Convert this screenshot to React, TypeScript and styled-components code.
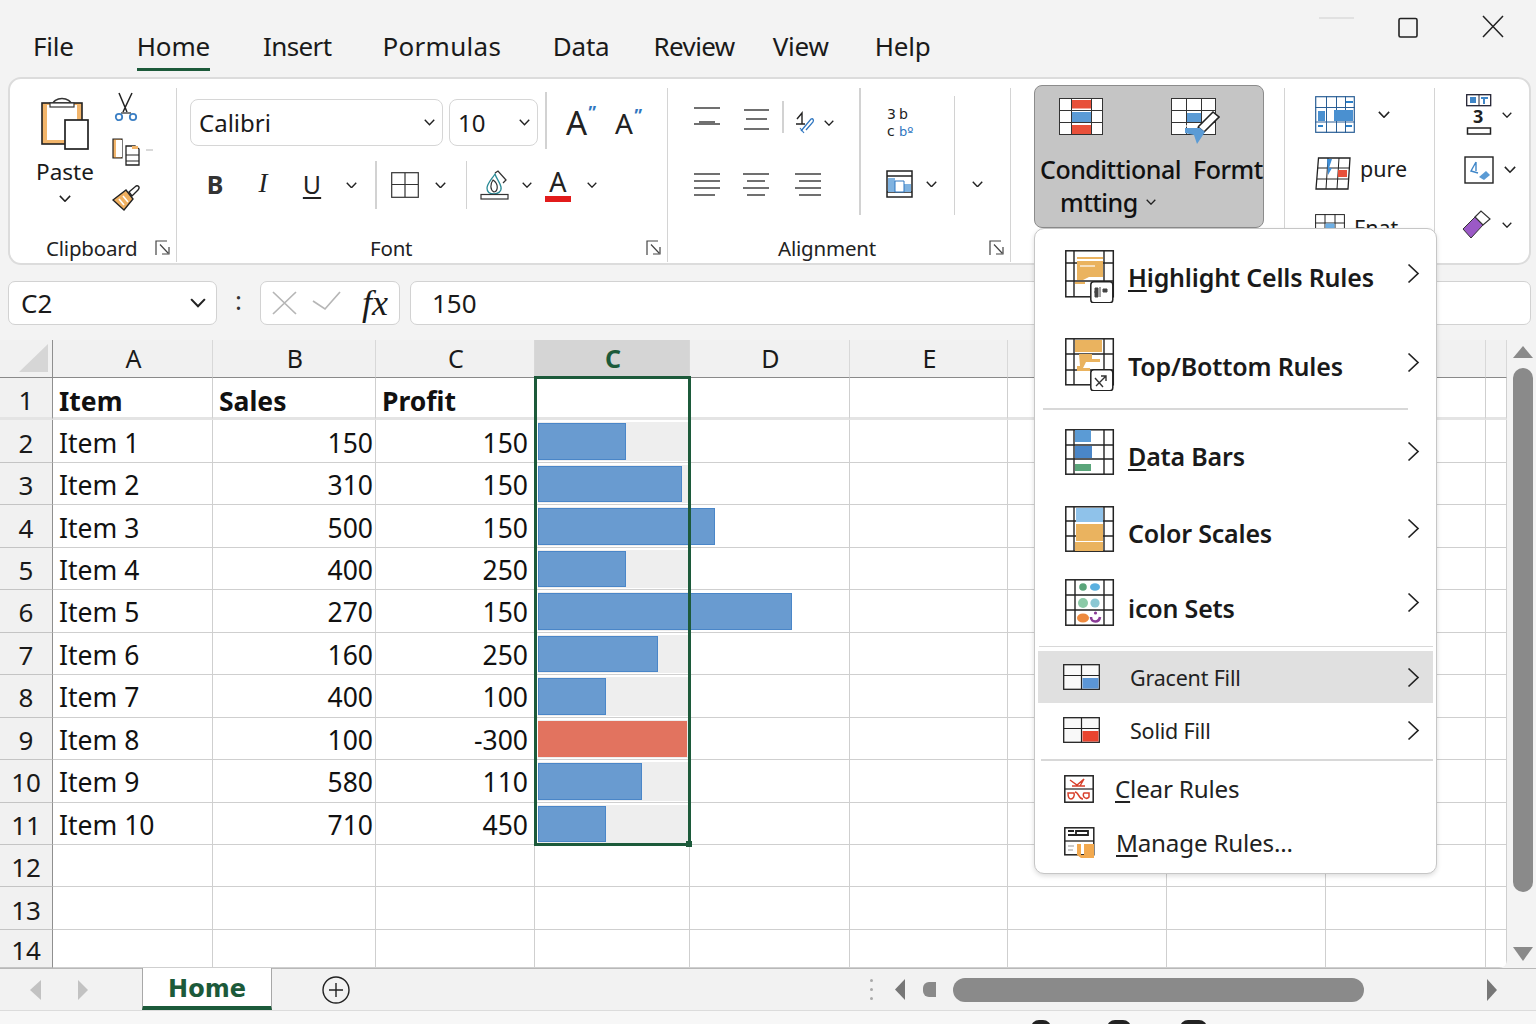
import React from 'react';
import styled, { createGlobalStyle } from 'styled-components';

const UI = '"Noto Sans", "Open Sans", "Liberation Sans", sans-serif';
const GREEN = '#1c5a3a';

const GlobalStyle = createGlobalStyle`
  html, body { margin: 0; padding: 0; background: #f3f3f3; overflow: hidden; }
  body { font-family: ${UI}; color: #1a1a1a; }
  #root { width: 1536px; height: 1024px; }
  * { box-sizing: border-box; }
`;

/* ---------- icons ---------- */

const Chev: React.FC<{ s?: number }> = ({ s = 10 }) => (
  <svg width={s} height={s * 0.6} viewBox="0 0 10 6" fill="none" stroke="#222" strokeWidth="1.3">
    <path d="M.7.7 5 5.2 9.3.7" />
  </svg>
);

const Launcher = () => (
  <svg width="15" height="16" viewBox="0 0 15 16" fill="none" stroke="#444" strokeWidth="1.2">
    <path d="M1 15V1h11" />
    <path d="M5 4.5 13 13M7 14h7V7" />
  </svg>
);

const PasteIcon = () => (
  <svg width="50" height="56" viewBox="0 0 50 56">
    <rect x="2" y="7" width="40" height="41" fill="#f2b56b" stroke="#222" strokeWidth="1.6" />
    <rect x="7" y="9" width="30" height="35" fill="#fff" />
    <path d="M12 10c1-10 19-10 20 0" fill="none" stroke="#333" strokeWidth="1.6" />
    <rect x="10" y="7" width="24" height="4" fill="#fff" stroke="#333" strokeWidth="1.2" />
    <rect x="25" y="24" width="23" height="29" fill="#fff" stroke="#222" strokeWidth="1.7" />
  </svg>
);

const ScissorsIcon = () => (
  <svg width="24" height="30" viewBox="0 0 24 30" fill="none">
    <path d="M5 1 13 20M18 1 9 20" stroke="#222" strokeWidth="1.5" />
    <path d="M7 21h10" stroke="#222" strokeWidth="1.2" />
    <circle cx="5" cy="25" r="3.2" stroke="#3b7fc4" strokeWidth="1.8" />
    <circle cx="19" cy="25" r="3.2" stroke="#3b7fc4" strokeWidth="1.8" />
  </svg>
);

const CopyIcon = () => (
  <svg width="42" height="30" viewBox="0 0 42 30" fill="none">
    <path d="M1 2h9v19H1z" fill="#f2b56b" stroke="#222" strokeWidth="1.2" />
    <path d="M4 3h6v17H4z" fill="#fff" />
    <path d="M14 9h9l4 3v16H14z" fill="#fff" stroke="#222" strokeWidth="1.3" />
    <path d="M14 18h13M14 24h13" stroke="#222" strokeWidth="1" />
    <path d="M20 9h6v3h-6z" fill="#f2b56b" />
    <path d="M34 13h7" stroke="#ccc" strokeWidth="1.5" />
  </svg>
);

const BrushIcon = () => (
  <svg width="28" height="26" viewBox="0 0 28 26">
    <path d="M1 15 14 5l7 9-9 11z" fill="#f0b060" stroke="#222" strokeWidth="1.4" />
    <path d="M7 14l5 6M11 11l5 6" stroke="#fff" strokeWidth="1.6" />
    <path d="M17 7 24 1c3-1 4 2 2 4l-6 6z" fill="#fff" stroke="#222" strokeWidth="1.4" />
  </svg>
);

const BordersIcon = () => (
  <svg width="28" height="26" viewBox="0 0 28 26" fill="#fff" stroke="#333" strokeWidth="1.2">
    <rect x=".7" y=".7" width="26.6" height="24.6" />
    <path d="M14 1v24M1 12.5h26" />
  </svg>
);

const FillIcon = () => (
  <svg width="30" height="30" viewBox="0 0 30 30" fill="none">
    <path d="M15 4c-4 6-8 10-8 14 0 5 4 6 7 6s8-2 7-7-5-9-6-13z" stroke="#2a8a96" strokeWidth="1.3" />
    <path d="M13 10c-3 4-3 10 1 12 4-1 5-8-1-12z" stroke="#333" strokeWidth="1.2" />
    <path d="M15 3l3-2 8 9-3 3" stroke="#333" strokeWidth="1.3" />
    <rect x="1" y="24.5" width="27" height="4.5" fill="#fff" stroke="#333" strokeWidth="1.2" />
  </svg>
);

const AlignLines: React.FC<{ lines: [number, number, number][] }> = ({ lines }) => (
  <svg width="28" height="26" viewBox="0 0 28 26" stroke="#222" strokeWidth="1.3">
    {lines.map(([a, b, y]) => (
      <path key={y} d={`M${a} ${y}H${b}`} />
    ))}
  </svg>
);

const OrientIcon = () => (
  <svg width="20" height="24" viewBox="0 0 20 24" fill="none">
    <path d="M2 8 7 2v11M1 13h9" stroke="#222" strokeWidth="1.4" />
    <path d="M6 20 16 8c2-1 3 1 2 3l-7 8" stroke="#2f76c0" strokeWidth="1.3" />
    <path d="M5 17l4 5" stroke="#2f76c0" strokeWidth="1.2" />
  </svg>
);

const WrapIcon = () => (
  <svg width="32" height="38" viewBox="0 0 32 38">
    <text x="3" y="15" fontFamily="DejaVu Sans" fontSize="14" letterSpacing="3" fill="#222">3b</text>
    <text x="3" y="32" fontFamily="DejaVu Sans" fontSize="14" fill="#222">c</text>
    <text x="15" y="32" fontFamily="DejaVu Sans" fontSize="13" fill="#2f76c0">bº</text>
  </svg>
);

const MergeIcon = () => (
  <svg width="27" height="28" viewBox="0 0 27 28" fill="none">
    <rect x="1" y="1" width="25" height="26" fill="#fff" stroke="#222" strokeWidth="1.5" />
    <path d="M1 6h25M1 22h25" stroke="#222" strokeWidth="1.5" />
    <path d="M2 8h7v14H2zM18 14h7v8h-7z" fill="#7fb2e0" />
    <path d="M9 11h9v11H9z" fill="#fff" stroke="#2f76c0" strokeWidth="1" />
  </svg>
);

const CondOneIcon = () => (
  <svg width="44" height="37" viewBox="0 0 44 37">
    <rect x=".5" y=".5" width="43" height="36" fill="#fff" stroke="#333" />
    <path d="M12.5 0v37M32.5 0v37M0 12.5h44M0 24.5h44" stroke="#333" />
    <rect x="13" y="2" width="19" height="8.5" fill="#e8503a" />
    <rect x="13" y="14" width="19" height="10" fill="#5b9bd5" />
    <rect x="13" y="27" width="19" height="9" fill="#e8503a" />
  </svg>
);

const CondTwoIcon = () => (
  <svg width="49" height="47" viewBox="0 0 49 47">
    <rect x=".5" y=".5" width="44" height="36" fill="#fff" stroke="#333" />
    <path d="M15.5 0v37M30.5 0v37M0 12.5h45M0 24.5h45" stroke="#333" />
    <rect x="16" y="15" width="14" height="9" fill="#5b9bd5" />
    <path d="M27 29 42 14l6 5-15 15z" fill="#fff" stroke="#222" strokeWidth="1.6" />
    <path d="M14 30h15l5 4-8 12-3-9-9-2z" fill="#5b9bd5" />
    <path d="M15 28h12" stroke="#fff" strokeWidth="1.2" />
  </svg>
);

const TableBlueIcon = () => (
  <svg width="40" height="37" viewBox="0 0 40 37">
    <rect x=".7" y=".7" width="38.6" height="35.6" fill="#fff" stroke="#2a5f96" strokeWidth="1.2" />
    <path d="M11.5 0v37M21.5 0v37M30.5 0v37M0 11.5h40M0 26h40" stroke="#2a5f96" />
    <path d="M3 15h7v10H3zM19 14h19v11H19z" fill="#4a90d0" />
    <path d="M31 6h7M3 30h5M31 30h6" stroke="#2a7fc8" strokeWidth="2" />
  </svg>
);

const PureIcon = () => (
  <svg width="36" height="33" viewBox="0 0 36 33">
    <path d="M3.5 1H35l-2 31H1z" fill="#fff" stroke="#222" strokeWidth="1.3" />
    <path d="M13 1 11 32M24 1l-2 31M2.5 11H34M2 22h31" stroke="#222" />
    <path d="M12 2h5l-3 9h3l-4 7z" fill="#3f8fd8" />
    <rect x="23" y="13" width="9" height="7" fill="#e8503a" />
  </svg>
);

const FormatSmallIcon = () => (
  <svg width="30" height="20" viewBox="0 0 30 20">
    <rect x=".6" y=".6" width="28.8" height="30" fill="#fff" stroke="#222" />
    <path d="M10 0v20M20 0v20M0 9h30" stroke="#222" />
    <rect x="10.5" y="9.5" width="9" height="8" fill="#6eb0e6" />
  </svg>
);

const NumberThreeIcon = () => (
  <svg width="28" height="42" viewBox="0 0 28 42">
    <rect x=".7" y=".7" width="24" height="11" fill="#fff" stroke="#223" strokeWidth="1.3" />
    <path d="M13 1v11" stroke="#223" />
    <path d="M4 3h6v6H4zM15 3h7v2h-3v5h-2V5h-2z" fill="#3f86c8" />
    <text x="7" y="29" fontFamily="Noto Sans" fontWeight="700" fontSize="18" fill="#222">3</text>
    <rect x="1.5" y="34" width="23" height="6" fill="#fff" stroke="#222" strokeWidth="1.5" />
  </svg>
);

const SortBoxIcon = () => (
  <svg width="30" height="28" viewBox="0 0 30 28" fill="none">
    <rect x="1" y="1" width="28" height="26" fill="#fff" stroke="#222" strokeWidth="1.4" />
    <path d="M12 6 7 15l7 2M12 6v9" stroke="#3f86c8" strokeWidth="1.4" />
    <path d="M15 21l7-6 4 4-6 5z" fill="#5b9bd5" />
  </svg>
);

const EraserIcon = () => (
  <svg width="30" height="30" viewBox="0 0 30 30">
    <path d="M1 19 13 7l8 8L9 28z" fill="#9b59c6" stroke="#333" strokeWidth="1" />
    <path d="M13 7 19 1l9 8-7 6z" fill="#fff" stroke="#333" strokeWidth="1.2" />
  </svg>
);

const MenuFrame: React.FC<{
  h: number;
  xs?: number[];
  ys: number[];
  children?: React.ReactNode;
  badge?: React.ReactNode;
}> = ({ h, xs = [9, 39], ys, children, badge }) => (
  <svg width="50" height={h} viewBox={`0 0 50 ${h}`}>
    <rect x=".8" y=".8" width="47.5" height={h - (badge ? 7 : 1.6)} fill="#fff" stroke="#222" strokeWidth="1.5" />
    {xs.map(x => <path key={x} d={`M${x} 1V${h - (badge ? 6 : 1)}`} stroke="#222" strokeWidth="1.4" />)}
    {ys.map(y => <path key={y} d={`M1 ${y}H48`} stroke="#222" strokeWidth="1.4" />)}
    {children}
    {badge}
  </svg>
);

const Badge: React.FC<{ children: React.ReactNode; y: number }> = ({ children, y }) => (
  <g transform={`translate(25 ${y})`}>
    <rect x=".8" y=".8" width="22" height="21" rx="3" fill="#fff" stroke="#222" strokeWidth="1.5" />
    {children}
  </g>
);

const HighlightIcon = () => (
  <MenuFrame h={53} ys={[13, 31]} badge={
    <Badge y={31}><path d="M5 7h3v9H5zM10 6v10M13 8h4v3h-4zM6 11H4" fill="#444" stroke="#444" /></Badge>
  }>
    <path d="M12 7h26v2H12z" fill="#eab35f" />
    <path d="M12 11h26v16H24l-6 3h-6z" fill="#eab35f" />
    <path d="M15 16h15" stroke="#fff" strokeWidth="2" opacity=".6" />
    <path d="M10 32h10v2H10z" fill="#eab35f" />
  </MenuFrame>
);

const TopBottomIcon = () => (
  <MenuFrame h={53} ys={[16, 32]} badge={
    <Badge y={31}><path d="M6 17 16 7M11 7h5v5M5 9l8 9" fill="none" stroke="#333" strokeWidth="1.4" /></Badge>
  }>
    <path d="M10 2h27v12H10z" fill="#eab35f" />
    <path d="M14 16h13v5h8v3H21l-3 6h7v3H12v-5h3z" fill="#eab35f" />
  </MenuFrame>
);

const DataBarsIcon = () => (
  <MenuFrame h={46} ys={[16, 30]}>
    <path d="M10 1h16v12H10z" fill="#5b9bd5" />
    <path d="M10 17h17v12H10z" fill="#4a86c8" />
    <path d="M10 35h16v7H10z" fill="#5aa57a" />
  </MenuFrame>
);

const ColorScalesIcon = () => (
  <MenuFrame h={46} ys={[15, 30]}>
    <path d="M11 2h27v14H11z" fill="#8fc2ea" />
    <path d="M11 18h27v17H11zM10 36h28v9H10z" fill="#eab35f" />
  </MenuFrame>
);

const IconSetsIcon = () => (
  <MenuFrame h={47} xs={[10, 39]} ys={[16, 31]}>
    <circle cx="18" cy="8" r="3.8" fill="#5aa57a" />
    <ellipse cx="30" cy="8" rx="5" ry="3.8" fill="#5ab0e0" />
    <circle cx="18" cy="24" r="5" fill="#8ccaa8" />
    <circle cx="30" cy="24" r="4.6" fill="#8cc8d4" />
    <ellipse cx="18" cy="39" rx="6" ry="4.6" fill="#ee8a3e" />
    <path d="M26 38c0 6 8 6 9 0" fill="none" stroke="#8a3a96" strokeWidth="2.6" />
    <circle cx="30.5" cy="34" r="1.6" fill="#8a3a96" />
  </MenuFrame>
);

const FillSwatch: React.FC<{ color: string }> = ({ color }) => (
  <svg width="37" height="26" viewBox="0 0 37 26">
    <rect x=".7" y=".7" width="35.6" height="24.6" fill="#f9f9f9" stroke="#222" strokeWidth="1.3" />
    <path d="M18.5 1v24M1 11.5h35" stroke="#222" strokeWidth="1.2" />
    <rect x="19.5" y="14" width="16" height="10.5" fill={color} />
  </svg>
);

const ClearIcon = () => (
  <svg width="30" height="28" viewBox="0 0 30 28" fill="none">
    <rect x=".8" y=".8" width="28.4" height="26.4" fill="#fff" stroke="#222" strokeWidth="1.5" />
    <path d="M1 14h28" stroke="#222" strokeWidth="1.2" />
    <path d="M6 5l7 5 7-6-4 7M8 11h13" stroke="#d8402c" strokeWidth="1.4" />
    <path d="M4 18h6c1 3-1 6-3 6s-3-3-3-6zM11 17c4 0 3 7 8 7M20 18h5v4a3 3 0 0 1-5-4z" stroke="#d8402c" strokeWidth="1.5" />
  </svg>
);

const ManageIcon = () => (
  <svg width="31" height="32" viewBox="0 0 31 32" fill="none">
    <rect x=".8" y=".8" width="29" height="27" fill="#fff" stroke="#222" strokeWidth="1.5" />
    <path d="M1 14h29" stroke="#222" strokeWidth="1.3" />
    <path d="M4 4h6M12 4h12v4H12zM4 8h10" stroke="#222" strokeWidth="1.8" />
    <path d="M4 19h6M4 23h5" stroke="#bbb" strokeWidth="1.4" />
    <path d="M13 17h4v11h3v3h-3l-4-3zM20 17h10v14H20z" fill="#f2a94f" />
  </svg>
);

const Tri: React.FC<{ dir: 'l' | 'r' | 'u' | 'd'; c: string; w: number; h: number }> = ({ dir, c, w, h }) => {
  const pts = {
    l: `${w},0 ${w},${h} 0,${h / 2}`,
    r: `0,0 0,${h} ${w},${h / 2}`,
    u: `0,${h} ${w},${h} ${w / 2},0`,
    d: `0,0 ${w},0 ${w / 2},${h}`,
  }[dir];
  return (
    <svg width={w} height={h} viewBox={`0 0 ${w} ${h}`} style={{ flex: 'none' }}>
      <polygon points={pts} fill={c} />
    </svg>
  );
};

const MenuArrow = () => (
  <svg width="13" height="21" viewBox="0 0 13 21" fill="none" stroke="#222" strokeWidth="1.7">
    <path d="M1.5 1.5 11 10.5 1.5 19.5" />
  </svg>
);

/* ---------- layout ---------- */

const Page = styled.div`
  width: 1536px;
  height: 1024px;
  display: flex;
  flex-direction: column;
  position: relative;
  overflow: hidden;
`;

const TopRow = styled.div`
  height: 77px;
  flex: none;
  display: flex;
  justify-content: space-between;
`;

const Tabs = styled.nav`
  display: flex;
  padding-left: 33px;
`;

const Tab = styled.div<{ $ml: number; $ls: number; $active?: boolean }>`
  margin-left: ${p => p.$ml}px;
  height: 71px;
  padding-top: 27px;
  font-size: 26px;
  line-height: 38px;
  letter-spacing: ${p => p.$ls}px;
  white-space: nowrap;
  border-bottom: 3px solid ${p => (p.$active ? GREEN : 'transparent')};
`;

const WindowButtons = styled.div`
  display: flex;
  align-items: flex-start;
  padding: 15px 32px 0 0;
`;

const WinBtn = styled.div<{ $ml: number }>`
  margin-left: ${p => p.$ml}px;
  display: flex;
`;

const Ribbon = styled.div`
  flex: none;
  width: 1523px;
  height: 188px;
  margin-left: 8px;
  display: flex;
  background: #fff;
  border: 2px solid #dcdcdc;
  border-radius: 13px;
`;

const Group = styled.section<{ $w: number; $line?: boolean }>`
  flex: none;
  width: ${p => p.$w}px;
  height: 174px;
  margin-top: 9px;
  display: flex;
  flex-direction: column;
  border-right: ${p => (p.$line ? '1.5px solid #d4d4d4' : 'none')};
`;

const GroupBody = styled.div<{ $pl?: number; $pt?: number }>`
  flex: 1;
  display: flex;
  padding: ${p => p.$pt ?? 0}px 0 0 ${p => p.$pl ?? 0}px;
  min-height: 0;
`;

const GroupLabel = styled.div<{ $pl: number }>`
  height: 28px;
  flex: none;
  display: flex;
  align-items: center;
  padding-left: ${p => p.$pl}px;
  padding-right: 6px;
  font-size: 20.5px;
  color: #222;
  letter-spacing: -0.2px;
  & > svg {
    margin-left: auto;
  }
`;

const Column = styled.div<{ $gap?: number; $ml?: number; $w?: number }>`
  display: flex;
  flex-direction: column;
  flex: none;
  gap: ${p => p.$gap ?? 0}px;
  margin-left: ${p => p.$ml ?? 0}px;
  width: ${p => (p.$w ? `${p.$w}px` : 'auto')};
`;

const Row = styled.div<{ $h?: number; $mt?: number; $pl?: number }>`
  display: flex;
  align-items: center;
  flex: none;
  height: ${p => (p.$h ? `${p.$h}px` : 'auto')};
  margin-top: ${p => p.$mt ?? 0}px;
  padding-left: ${p => p.$pl ?? 0}px;
`;

const Tool = styled.div<{ $w: number; $mt?: number }>`
  flex: none;
  width: ${p => p.$w}px;
  margin-top: ${p => p.$mt ?? 0}px;
  display: flex;
  align-items: center;
  justify-content: center;
  color: #222;
  & > svg {
    flex: none;
  }
`;

const BoxEnd = styled(Tool)`
  margin-left: auto;
`;

const VRule = styled.div<{ $h: number; $ml?: number; $mt?: number }>`
  flex: none;
  width: 1.5px;
  height: ${p => p.$h}px;
  margin-left: ${p => p.$ml ?? 0}px;
  margin-top: ${p => p.$mt ?? 0}px;
  background: #d2d2d2;
  align-self: flex-start;
`;

const PasteLabel = styled.div`
  font-size: 22.5px;
  line-height: 32px;
  margin-top: 4px;
  text-align: center;
`;

const Select = styled.div<{ $w: number; $ml?: number }>`
  flex: none;
  width: ${p => p.$w}px;
  height: 47px;
  margin-left: ${p => p.$ml ?? 0}px;
  display: flex;
  align-items: center;
  justify-content: space-between;
  padding: 0 7px 0 8px;
  border: 1.5px solid #d6d6d6;
  border-radius: 8px;
  font-size: 24px;
`;

const FormatLetter = styled.span<{ $bold?: boolean; $italic?: boolean; $under?: boolean }>`
  font-family: ${p => (p.$italic ? '"Liberation Serif", serif' : UI)};
  font-size: ${p => (p.$italic ? 27 : 25)}px;
  font-weight: ${p => (p.$bold ? 700 : 400)};
  font-style: ${p => (p.$italic ? 'italic' : 'normal')};
  text-decoration: ${p => (p.$under ? 'underline' : 'none')};
  text-underline-offset: 3px;
  color: ${p => (p.$bold ? '#333' : '#222')};
`;

const GrowLetter = styled.span<{ $size: number }>`
  font-size: ${p => p.$size}px;
  line-height: 1;
  position: relative;
  &::after {
    content: '”';
    position: absolute;
    top: -2px;
    right: -9px;
    font-size: 17px;
    font-weight: 700;
    color: #2f76c0;
  }
`;

const FontColor = styled.span`
  display: inline-flex;
  width: 26px;
  justify-content: center;
  font-size: 27px;
  line-height: 28px;
  border-bottom: 6px solid #e21b1b;
`;

const CondButton = styled.div`
  width: 230px;
  height: 143px;
  margin: -3px 0 0 23px;
  padding-top: 12px;
  background: #c5c5c5;
  border: 1.5px solid #8c8c8c;
  border-radius: 8px;
  flex: none;
`;

const CondIcons = styled.div`
  display: flex;
  height: 54px;
  padding-left: 24px;
  gap: 68px;
  align-items: flex-start;
`;

const CondText = styled.div<{ $pl: number }>`
  display: flex;
  align-items: center;
  gap: 8px;
  height: 33px;
  padding-left: ${p => p.$pl}px;
  font-size: 25px;
  font-weight: 500;
  white-space: pre;
  letter-spacing: -0.5px;
  color: #111;
`;

const ToolText = styled.span<{ $dy?: number }>`
  font-size: 21.5px;
  margin-left: 9px;
  margin-top: ${p => p.$dy ?? 0}px;
  line-height: 1;
`;

const FormulaBar = styled.div`
  flex: none;
  display: flex;
  align-items: stretch;
  height: 44px;
  margin: 16px 0 15px 8px;
`;

const BarBox = styled.div<{ $w: number; $ml?: number; $pl?: number }>`
  flex: none;
  width: ${p => p.$w}px;
  margin-left: ${p => p.$ml ?? 0}px;
  padding-left: ${p => p.$pl ?? 0}px;
  display: flex;
  align-items: center;
  background: #fff;
  border: 1.5px solid #d2d2d2;
  border-radius: 7px;
  font-size: 26px;
`;

const Dots = styled.div`
  width: 43px;
  flex: none;
  display: flex;
  align-items: center;
  justify-content: center;
  padding-bottom: 6px;
  font-size: 26px;
  color: #333;
`;

const Fx = styled.span`
  font-family: 'Liberation Serif', serif;
  font-style: italic;
  font-size: 36px;
  margin-left: 20px;
  line-height: 1;
`;

const SheetArea = styled.div`
  flex: none;
  height: 628px;
  display: flex;
`;

const Sheet = styled.div`
  flex: none;
  position: relative;
  width: 1507px;
  display: grid;
  grid-template-columns: 53px 160px 163px 159px 155px 160px 158px 159px 159px 160px 21px;
  grid-template-rows: 38px repeat(13, 42.46px) 38px;
  background: #fff;
  border-bottom-right-radius: 8px;
  overflow: hidden;
`;

const Corner = styled.div`
  background: #f1f1f1;
  border-right: 1.5px solid #8f8f8f;
  border-bottom: 1.5px solid #8a8a8a;
  display: flex;
  align-items: flex-end;
  justify-content: flex-end;
  padding: 0 4px 5px 0;
`;

const ColHead = styled.div<{ $selected?: boolean }>`
  display: flex;
  align-items: center;
  justify-content: center;
  padding: 0 0 2px 2px;
  background: ${p => (p.$selected ? '#d5d5d5' : '#f1f1f1')};
  border-bottom: 1.5px solid #8a8a8a;
  border-right: 1px solid #d8d8d8;
  font-size: 25px;
  font-weight: ${p => (p.$selected ? 700 : 400)};
  color: ${p => (p.$selected ? GREEN : '#1a1a1a')};
`;

const RowHead = styled.div<{ $first?: boolean }>`
  display: flex;
  align-items: center;
  justify-content: center;
  padding-top: ${p => (p.$first ? 5 : 3)}px;
  background: #f1f1f1;
  border-right: 1.5px solid #8f8f8f;
  border-bottom: ${p => (p.$first ? 3 : 1)}px solid ${p => (p.$first ? '#e4e4e4' : '#c4c4c4')};
  font-size: 26px;
`;

const Cell = styled.div<{ $pr?: number; $bold?: boolean; $first?: boolean }>`
  display: flex;
  align-items: center;
  justify-content: ${p => (p.$pr ? 'flex-end' : 'flex-start')};
  padding: ${p => (p.$first ? 6 : 3)}px ${p => p.$pr ?? 0}px 0 ${p => (p.$pr ? 0 : 6)}px;
  border-right: 1px solid #cfcfcf;
  border-bottom: ${p => (p.$first ? 3 : 1)}px solid ${p => (p.$first ? '#e4e4e4' : '#cfcfcf')};
  font-size: 26.5px;
  font-weight: ${p => (p.$bold ? 700 : 400)};
  color: #111;
  white-space: nowrap;
`;

const BarCell = styled.div`
  padding: 2px 2px 1px 3px;
  border-right: 1px solid #cfcfcf;
  border-bottom: 1px solid #cfcfcf;
`;

const BarTrack = styled.div`
  width: 150px;
  height: 100%;
  padding: 1px 0;
  background: #eeeeee;
`;

const DataBar = styled.div<{ $w: number; $neg?: boolean }>`
  position: relative;
  z-index: 1;
  width: ${p => p.$w}px;
  height: 100%;
  background: ${p => (p.$neg ? '#e2735f' : '#699bd0')};
  border: 1px solid ${p => (p.$neg ? '#e2735f' : '#4a86c8')};
`;

/* out of flow so it takes no cells from the grid's auto-placement */
const SelectionBox = styled.div`
  grid-column: 5 / 6;
  grid-row: 2 / 13;
  position: absolute;
  inset: -2px -1px -1px -1px;
  z-index: 2;
  border: 3px solid ${GREEN};
  pointer-events: none;
  &::after {
    content: '';
    position: absolute;
    right: -4px;
    bottom: -4px;
    width: 6px;
    height: 6px;
    background: ${GREEN};
  }
`;

const VScroll = styled.div`
  flex: 1;
  display: flex;
  flex-direction: column;
  align-items: center;
  padding: 6px 2px 0 5px;
`;

const VThumb = styled.div`
  width: 20px;
  height: 524px;
  margin: 10px 0 55px;
  background: #8a8a8a;
  border-radius: 10px;
`;

const BottomBar = styled.div`
  flex: none;
  height: 43px;
  display: flex;
  align-items: center;
  background: #f2f2f2;
  border-top: 1.5px solid #b8b8b8;
  border-bottom: 1.5px solid #dcdcdc;
  padding-left: 30px;
`;

const SheetTab = styled.div`
  flex: none;
  width: 130px;
  height: 42px;
  margin: -1px 50px 0 17px;
  align-self: flex-start;
  display: flex;
  align-items: center;
  justify-content: center;
  padding-top: 4px;
  background: #fff;
  border-left: 1px solid #a8a8a8;
  border-right: 1px solid #a8a8a8;
  border-bottom: 4px solid ${GREEN};
  font-family: 'DejaVu Sans', sans-serif;
  font-weight: 700;
  font-size: 24px;
  color: ${GREEN};
`;

const AddSheet = styled.div`
  flex: none;
  width: 28px;
  height: 28px;
  display: flex;
`;

const VDots = styled.div`
  flex: none;
  margin: 0 22px 0 520px;
  display: flex;
  flex-direction: column;
  gap: 6px;
  & > i {
    width: 3px;
    height: 3px;
    border-radius: 50%;
    background: #aaa;
  }
`;

const MiniThumb = styled.div`
  flex: none;
  width: 13px;
  height: 15px;
  margin: 0 17px 0 18px;
  background: #8a8a8a;
  border-radius: 6px 0 0 6px;
`;

const HThumb = styled.div`
  flex: none;
  width: 411px;
  height: 24px;
  margin-right: 123px;
  background: #8a8a8a;
  border-radius: 12px;
`;

const StatusStrip = styled.div`
  flex: 1;
  display: flex;
  align-items: flex-start;
  padding: 9px 0 0 1031px;
  background: #f7f7f7;
  overflow: hidden;
`;

const StatusBlob = styled.i<{ $w: number; $ml: number }>`
  flex: none;
  width: ${p => p.$w}px;
  height: 8px;
  margin-left: ${p => p.$ml}px;
  background: #222;
  border-radius: 9px 9px 0 0;
`;

/* dropdown lies over the ribbon and the sheet */
const Menu = styled.div`
  position: absolute;
  left: 1034px;
  top: 228px;
  width: 403px;
  height: 646px;
  padding-top: 3px;
  display: flex;
  flex-direction: column;
  z-index: 5;
  background: #fff;
  border: 1.5px solid #c6c6c6;
  border-radius: 10px;
  box-shadow: 0 2px 5px rgba(0, 0, 0, 0.14);
`;

const MenuRow = styled.div<{ $h: number; $pl: number; $on?: boolean; $mt?: number; $lift?: number }>`
  flex: none;
  height: ${p => p.$h}px;
  margin: ${p => p.$mt ?? 0}px 3px 0 3px;
  padding: 0 13px 0 ${p => p.$pl}px;
  display: flex;
  align-items: center;
  background: ${p => (p.$on ? '#e0e0e0' : 'transparent')};
  & > svg:last-child {
    margin-left: auto;
    margin-bottom: ${p => p.$lift ?? 0}px;
  }
`;

const MenuIcon = styled.div<{ $w: number }>`
  flex: none;
  width: ${p => p.$w}px;
  display: flex;
`;

const MenuTitle = styled.span<{ $pt?: number }>`
  padding-top: ${p => p.$pt ?? 8}px;
  font-size: 25px;
  font-weight: 600;
  letter-spacing: -0.18px;
  color: #1a1a1a;
  white-space: nowrap;
`;

const MenuFillText = styled.span`
  font-size: 21.5px;
  color: #222;
  letter-spacing: -0.2px;
`;

const MenuPlain = styled.span`
  font-size: 24.2px;
  color: #222;
  letter-spacing: -0.2px;
`;

const Access = styled.span`
  text-decoration: underline;
  text-underline-offset: 3px;
  text-decoration-thickness: 1.5px;
`;

const MenuLine = styled.div<{ $ml: number; $mr: number; $mt?: number }>`
  flex: none;
  height: 1.5px;
  margin: ${p => p.$mt ?? 0}px ${p => p.$mr}px 0 ${p => p.$ml}px;
  background: #d8d8d8;
`;

/* ---------- data ---------- */

const tabs = [
  { name: 'File', ml: 0, ls: -0.2 },
  { name: 'Home', ml: 63, ls: -0.2 },
  { name: 'Insert', ml: 53, ls: -0.6 },
  { name: 'Pormulas', ml: 51, ls: 0.3 },
  { name: 'Data', ml: 51.5, ls: -0.2 },
  { name: 'Review', ml: 44, ls: -0.6 },
  { name: 'View', ml: 38, ls: -0.2 },
  { name: 'Help', ml: 46, ls: -0.2 },
];

const heads = ['A', 'B', 'C', 'C', 'D', 'E', '', '', '', ''];

const rows: { item: string; sales: number; profit: number; bar: number }[] = [
  { item: 'Item 1', sales: 150, profit: 150, bar: 88 },
  { item: 'Item 2', sales: 310, profit: 150, bar: 144 },
  { item: 'Item 3', sales: 500, profit: 150, bar: 177 },
  { item: 'Item 4', sales: 400, profit: 250, bar: 88 },
  { item: 'Item 5', sales: 270, profit: 150, bar: 254 },
  { item: 'Item 6', sales: 160, profit: 250, bar: 120 },
  { item: 'Item 7', sales: 400, profit: 100, bar: 68 },
  { item: 'Item 8', sales: 100, profit: -300, bar: 149 },
  { item: 'Item 9', sales: 580, profit: 110, bar: 104 },
  { item: 'Item 10', sales: 710, profit: 450, bar: 68 },
];

const Blanks: React.FC<{ n: number; first?: boolean }> = ({ n, first }) => (
  <>
    {Array.from({ length: n }, (_, i) => <Cell key={i} $first={first} />)}
  </>
);

const SheetGrid = () => (
  <Sheet>
    <Corner>
      <svg width="29" height="28" viewBox="0 0 29 28"><polygon points="29,0 29,28 0,28" fill="#d6d6d6" /></svg>
    </Corner>
    {heads.map((h, i) => <ColHead key={i} $selected={i === 3}>{h}</ColHead>)}

    <RowHead $first>1</RowHead>
    <Cell $first $bold>Item</Cell>
    <Cell $first $bold>Sales</Cell>
    <Cell $first $bold>Profit</Cell>
    <Blanks n={7} first />

    {rows.map((r, i) => (
      <React.Fragment key={r.item}>
        <RowHead>{i + 2}</RowHead>
        <Cell>{r.item}</Cell>
        <Cell $pr={2}>{r.sales}</Cell>
        <Cell $pr={6}>{r.profit}</Cell>
        <BarCell>
          <BarTrack>
            <DataBar $w={r.bar} $neg={r.profit < 0} />
          </BarTrack>
        </BarCell>
        <Blanks n={6} />
      </React.Fragment>
    ))}

    {[12, 13, 14].map(n => (
      <React.Fragment key={n}>
        <RowHead>{n}</RowHead>
        <Blanks n={10} />
      </React.Fragment>
    ))}
    <SelectionBox />
  </Sheet>
);

const RibbonBar = () => (
  <Ribbon>
    <Group $w={167} $line>
      <GroupBody $pl={25} $pt={8}>
        <Column $w={60}>
          <Tool $w={60}><PasteIcon /></Tool>
          <PasteLabel>Paste</PasteLabel>
          <Tool $w={60} $mt={7}><Chev s={12} /></Tool>
        </Column>
        <Column $ml={17} $gap={15}>
          <Row $mt={-4} $pl={2}><ScissorsIcon /></Row>
          <Row><CopyIcon /></Row>
          <Row $mt={3}><BrushIcon /></Row>
        </Column>
      </GroupBody>
      <GroupLabel $pl={36}>Clipboard<Launcher /></GroupLabel>
    </Group>

    <Group $w={491} $line>
      <GroupBody $pl={13} $pt={11}>
        <Column>
          <Row $h={47}>
            <Select $w={253}>Calibri<Chev s={11} /></Select>
            <Select $w={89} $ml={6}>10<Chev s={11} /></Select>
            <VRule $h={57} $ml={7} $mt={-7} />
            <Tool $w={60}><GrowLetter $size={33}>A</GrowLetter></Tool>
            <Tool $w={35}><GrowLetter $size={28}>A</GrowLetter></Tool>
          </Row>
          <Row $h={40} $mt={19}>
            <Tool $w={50} $mt={-3}><FormatLetter $bold>B</FormatLetter></Tool>
            <Tool $w={46} $mt={-3}><FormatLetter $italic>I</FormatLetter></Tool>
            <Tool $w={52} $mt={-3}><FormatLetter $under>U</FormatLetter></Tool>
            <Tool $w={26}><Chev s={11} /></Tool>
            <VRule $h={48} $ml={11} $mt={-4} />
            <Tool $w={57}><BordersIcon /></Tool>
            <Tool $w={14}><Chev s={11} /></Tool>
            <VRule $h={48} $ml={18} $mt={-4} />
            <Tool $w={56}><FillIcon /></Tool>
            <Tool $w={8}><Chev s={10} /></Tool>
            <Tool $w={54}><FontColor>A</FontColor></Tool>
            <Tool $w={14}><Chev s={10} /></Tool>
          </Row>
        </Column>
      </GroupBody>
      <GroupLabel $pl={193}>Font<Launcher /></GroupLabel>
    </Group>

    <Group $w={343} $line>
      <GroupBody>
        <Column $w={191}>
          <Row $h={42} $mt={8} $pl={14}>
            <Tool $w={50}>
              <AlignLines lines={[[1, 27, 4], [6, 22, 18], [1, 27, 20]]} />
            </Tool>
            <Tool $w={50}>
              <AlignLines lines={[[1, 26, 6], [3, 24, 15], [1, 26, 25]]} />
            </Tool>
            <VRule $h={32} $mt={5} />
            <Tool $w={43} $mt={12}><OrientIcon /></Tool>
            <Tool $w={4} $mt={12}><Chev s={10} /></Tool>
          </Row>
          <Row $h={42} $mt={25} $pl={14}>
            <Tool $w={50}>
              <AlignLines lines={[[1, 27, 3], [1, 27, 10], [1, 27, 17], [1, 22, 24]]} />
            </Tool>
            <Tool $w={47}>
              <AlignLines lines={[[1, 27, 3], [5, 23, 10], [1, 27, 17], [5, 23, 24]]} />
            </Tool>
            <Tool $w={57}>
              <AlignLines lines={[[1, 27, 3], [5, 27, 10], [1, 27, 17], [5, 27, 24]]} />
            </Tool>
          </Row>
        </Column>
        <VRule $h={127} />
        <Column $w={93}>
          <Row $h={42} $mt={8} $pl={14}><Tool $w={50} $mt={12}><WrapIcon /></Tool></Row>
          <Row $h={42} $mt={25} $pl={14}>
            <Tool $w={50}><MergeIcon /></Tool>
            <Tool $w={14}><Chev s={11} /></Tool>
          </Row>
        </Column>
        <VRule $h={119} $mt={8} />
        <Column>
          <Row $h={42} $mt={75}><Tool $w={44}><Chev s={11} /></Tool></Row>
        </Column>
      </GroupBody>
      <GroupLabel $pl={110}>Alignment<Launcher /></GroupLabel>
    </Group>

    <Group $w={274} $line>
      <CondButton>
        <CondIcons>
          <CondOneIcon />
          <CondTwoIcon />
        </CondIcons>
        <CondText $pl={5}>{'Condittional  Formt'}</CondText>
        <CondText $pl={25}>mtting<Chev s={10} /></CondText>
      </CondButton>
    </Group>

    <Group $w={150} $line>
      <Column $ml={30}>
        <Row $h={37} $mt={8}>
          <TableBlueIcon />
          <Tool $w={58}><Chev s={12} /></Tool>
        </Row>
        <Row $h={33} $mt={24}>
          <PureIcon />
          <ToolText $dy={-9}>pure</ToolText>
        </Row>
        <Row $h={20} $mt={24}>
          <FormatSmallIcon />
          <ToolText $dy={8}>Fnat</ToolText>
        </Row>
      </Column>
    </Group>

    <Group $w={92}>
      <Column $ml={27}>
        <Row $h={41} $mt={6} $pl={3}>
          <Tool $w={30}><NumberThreeIcon /></Tool>
          <Tool $w={24}><Chev s={10} /></Tool>
        </Row>
        <Row $h={28} $mt={21} $pl={2}>
          <Tool $w={30}><SortBoxIcon /></Tool>
          <Tool $w={32}><Chev s={12} /></Tool>
        </Row>
        <Row $h={30} $mt={26}>
          <Tool $w={30}><EraserIcon /></Tool>
          <Tool $w={30}><Chev s={10} /></Tool>
        </Row>
      </Column>
    </Group>
  </Ribbon>
);

const RulesMenu = () => (
  <Menu>
    <MenuRow $h={88} $pl={27} $lift={6}>
      <MenuIcon $w={63}><HighlightIcon /></MenuIcon>
      <MenuTitle $pt={2}><Access>H</Access>ighlight Cells Rules</MenuTitle>
      <MenuArrow />
    </MenuRow>
    <MenuRow $h={88} $pl={27} $lift={4}>
      <MenuIcon $w={63}><TopBottomIcon /></MenuIcon>
      <MenuTitle $pt={3}>Top/Bottom Rules</MenuTitle>
      <MenuArrow />
    </MenuRow>
    <MenuLine $ml={8} $mr={28} />
    <MenuRow $h={84} $pl={27}>
      <MenuIcon $w={63}><DataBarsIcon /></MenuIcon>
      <MenuTitle><Access>D</Access>ata Bars</MenuTitle>
      <MenuArrow />
    </MenuRow>
    <MenuRow $h={70} $pl={27}>
      <MenuIcon $w={63}><ColorScalesIcon /></MenuIcon>
      <MenuTitle>Color Scales</MenuTitle>
      <MenuArrow />
    </MenuRow>
    <MenuRow $h={78} $pl={27}>
      <MenuIcon $w={63}><IconSetsIcon /></MenuIcon>
      <MenuTitle $pt={10}>icon Sets</MenuTitle>
      <MenuArrow />
    </MenuRow>
    <MenuLine $ml={4} $mr={3} $mt={4} />
    <MenuRow $h={52} $pl={25} $on $mt={4}>
      <MenuIcon $w={67}><FillSwatch color="#5b96d6" /></MenuIcon>
      <MenuFillText>Gracent Fill</MenuFillText>
      <MenuArrow />
    </MenuRow>
    <MenuRow $h={54} $pl={25}>
      <MenuIcon $w={67}><FillSwatch color="#e8432e" /></MenuIcon>
      <MenuFillText>Solid Fill</MenuFillText>
      <MenuArrow />
    </MenuRow>
    <MenuLine $ml={6} $mr={3} $mt={2} />
    <MenuRow $h={56} $pl={26}>
      <MenuIcon $w={51}><ClearIcon /></MenuIcon>
      <MenuPlain><Access>C</Access>lear Rules</MenuPlain>
    </MenuRow>
    <MenuRow $h={52} $pl={26}>
      <MenuIcon $w={52}><ManageIcon /></MenuIcon>
      <MenuPlain><Access>M</Access>anage Rules...</MenuPlain>
    </MenuRow>
  </Menu>
);

export default function App() {
  return (
    <Page>
      <GlobalStyle />
      <TopRow>
        <Tabs>
          {tabs.map(t => (
            <Tab key={t.name} $ml={t.ml} $ls={t.ls} $active={t.name === 'Home'}>{t.name}</Tab>
          ))}
        </Tabs>
        <WindowButtons>
          <WinBtn $ml={0}>
            <svg width="35" height="6" viewBox="0 0 35 6"><path d="M0 3h35" stroke="#cfcfcf" strokeWidth="1.2" /></svg>
          </WinBtn>
          <WinBtn $ml={44}>
            <svg width="20" height="23" viewBox="0 0 20 23" fill="none" stroke="#222" strokeWidth="1.6">
              <rect x="1" y="3.5" width="18" height="18.5" rx="1.5" />
            </svg>
          </WinBtn>
          <WinBtn $ml={64}>
            <svg width="22" height="23" viewBox="0 0 22 23" fill="none" stroke="#222" strokeWidth="1.5">
              <path d="M1 1l20 21M21 1 1 22" />
            </svg>
          </WinBtn>
        </WindowButtons>
      </TopRow>

      <RibbonBar />

      <FormulaBar>
        <BarBox $w={209} $pl={12}>
          C2
          <BoxEnd $w={36}><Chev s={16} /></BoxEnd>
        </BarBox>
        <Dots>:</Dots>
        <BarBox $w={140} $pl={11}>
          <svg width="70" height="24" viewBox="0 0 70 24" fill="none" stroke="#b6b6b6" strokeWidth="1.7">
            <path d="M1 1l23 22M24 1 1 23M41 10l12 8L68 1" />
          </svg>
          <Fx>fx</Fx>
        </BarBox>
        <BarBox $w={1121} $ml={10} $pl={21}>150</BarBox>
      </FormulaBar>

      <SheetArea>
        <SheetGrid />
        <VScroll>
          <Tri dir="u" c="#8a8a8a" w={20} h={12} />
          <VThumb />
          <Tri dir="d" c="#8a8a8a" w={20} h={14} />
        </VScroll>
      </SheetArea>

      <BottomBar>
        <Tri dir="l" c="#c2c2c2" w={11} h={20} />
        <Tool $w={84}><Tri dir="r" c="#c2c2c2" w={10} h={20} /></Tool>
        <SheetTab>Home</SheetTab>
        <AddSheet>
          <svg width="28" height="28" viewBox="0 0 28 28" fill="none" stroke="#222" strokeWidth="1.4">
            <circle cx="14" cy="14" r="13" />
            <path d="M14 7v14M7 14h14" />
          </svg>
        </AddSheet>
        <VDots><i /><i /><i /></VDots>
        <Tri dir="l" c="#777" w={10} h={21} />
        <MiniThumb />
        <HThumb />
        <Tri dir="r" c="#777" w={10} h={22} />
      </BottomBar>

      <StatusStrip>
        <StatusBlob $w={20} $ml={0} />
        <StatusBlob $w={24} $ml={56} />
        <StatusBlob $w={27} $ml={49} />
      </StatusStrip>

      <RulesMenu />
    </Page>
  );
}
